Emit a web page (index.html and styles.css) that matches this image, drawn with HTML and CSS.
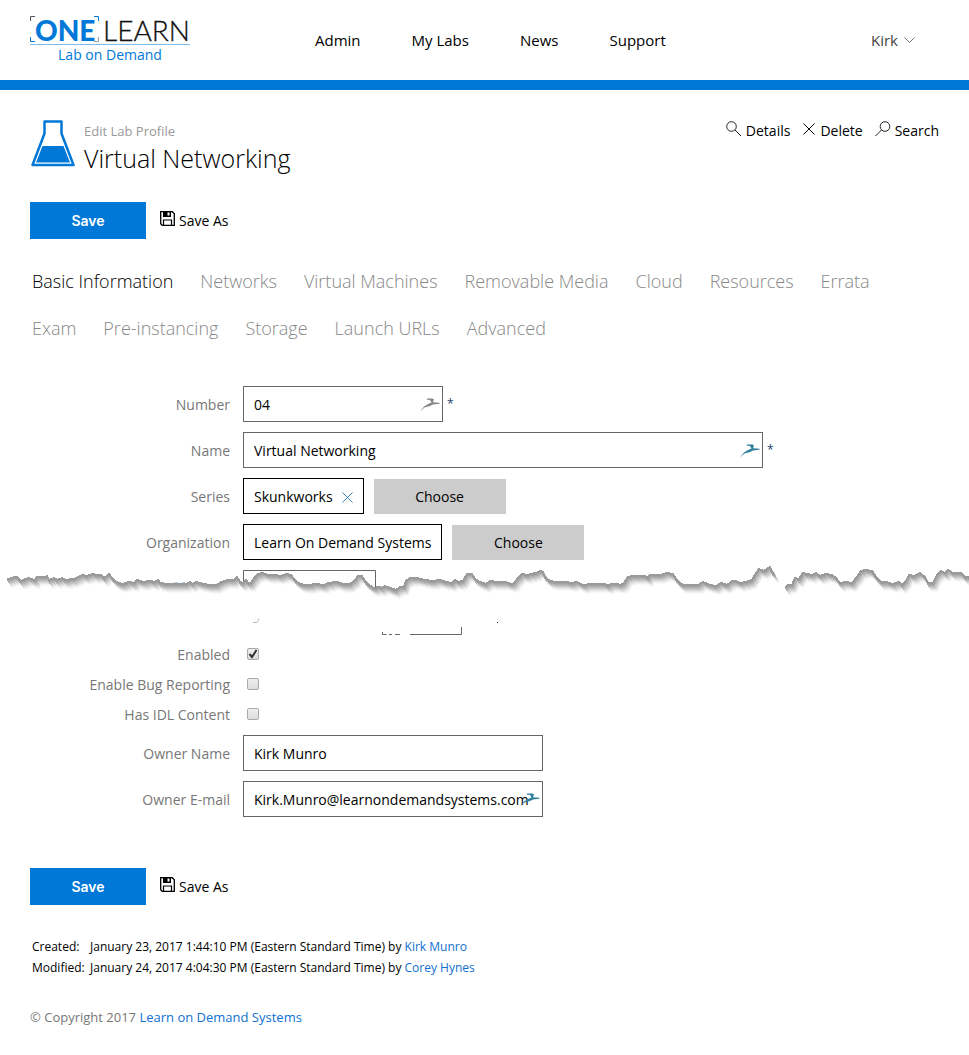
FILE: index.html
```html
<!DOCTYPE html>
<html lang="en">
<head>
<meta charset="utf-8">
<title>Edit Lab Profile - Virtual Networking</title>
<link rel="stylesheet" href="styles.css">
</head>
<body>
<svg class="defs" aria-hidden="true">
  <symbol id="floppy" viewBox="0 0 15 15"><path d="M.7.7h11.6l2 2v11.6H2.2L.7 12.800z" fill="none" stroke="#000" stroke-width="1.3"/><path d="M3 1h8v5H3z" fill="#000"/><path d="M7.500 1.500h2v3h-2z" fill="#fff"/><path d="M3.500 14V9h8v5" fill="none" stroke="#000" stroke-width="1.200"/></symbol>
  <symbol id="cross" viewBox="0 0 12 12"><path d="M.5.5l11 11M11.500.5l-11 11" fill="none" stroke="currentColor"/></symbol>
  <symbol id="crane" viewBox="0 0 20 14"><path d="M0 13.500L4 8.500 8 6l3.500-1.500L10 2 6.500 1.500 7 .5h5.500l1.500 1-1 2.800 6.500.5v1L13 6.500 10 8l-5.500 1.500z" fill="currentColor"/></symbol>
</svg>
<header class="top">
  <a class="logo" href="#" aria-label="One Learn Lab on Demand">
    <span class="brand"><span class="one">ONE</span><span class="learn">LEARN</span>
      <svg class="brackets" viewBox="0 0 70 27" width="70" height="27" fill="none" aria-hidden="true"><path d="M.5 5V.5H5" stroke="#555"/><path d="M64 .5h4.500V5M.5 21v4.500H5" stroke="#0078d7"/><path d="M64 25.500h4.500V21" stroke="#999"/></svg>
    </span>
    <span class="tagline">Lab on Demand</span>
  </a>
  <nav class="nav"><a href="#">Admin</a><a href="#">My Labs</a><a href="#">News</a><a href="#">Support</a></nav>
  <button class="user" type="button">Kirk <svg width="11" height="7" viewBox="0 0 11 7"><path d="M.5.5l5 5 5-5" fill="none" stroke="#777"/></svg></button>
</header>
<main>
  <div class="heading">
    <svg class="flask" width="44" height="47" viewBox="0 0 44 47" aria-hidden="true"><path d="M13.500 1.500h17v12L42.500 45h-41l12-31.500z" fill="#fff" stroke="#0078d7" stroke-width="2.500" stroke-linejoin="round"/><path d="M11.500 26h21L39 42.500H5z" fill="#0078d7"/></svg>
    <div class="titles"><p class="kicker">Edit Lab Profile</p><h1>Virtual Networking</h1></div>
    <div class="actions">
      <a href="#"><svg width="16" height="16" viewBox="0 0 16 16" fill="none" stroke="#222"><circle cx="5.500" cy="5.500" r="4.800"/><path d="M9 9l6 6"/></svg>Details</a>
      <a href="#"><svg class="x" width="12" height="12"><use href="#cross"/></svg>Delete</a>
      <a href="#"><svg width="16" height="16" viewBox="0 0 16 16" fill="none" stroke="#222"><circle cx="10" cy="5.500" r="4.800"/><path d="M6.500 9l-6 6"/></svg>Search</a>
    </div>
  </div>
  <div class="save-row"><button class="save" type="button">Save</button><a href="#"><svg width="15" height="15"><use href="#floppy"/></svg>Save As</a></div>
  <nav class="tabs"><a class="active" href="#">Basic Information</a><a href="#">Networks</a><a href="#">Virtual Machines</a><a href="#">Removable Media</a><a href="#">Cloud</a><a href="#">Resources</a><a href="#">Errata</a><a href="#">Exam</a><a href="#">Pre-instancing</a><a href="#">Storage</a><a href="#">Launch URLs</a><a href="#">Advanced</a></nav>
  <form class="form">
    <div class="row"><label for="number">Number</label><div class="control"><span class="field short"><input id="number" type="text" value="04"><svg class="crane muted"><use href="#crane"/></svg></span><span class="req">*</span></div></div>
    <div class="row"><label for="name">Name</label><div class="control"><span class="field long"><input id="name" type="text" value="Virtual Networking"><svg class="crane"><use href="#crane"/></svg></span><span class="req">*</span></div></div>
    <div class="row"><span class="label">Series</span><div class="control"><span class="chip">Skunkworks<button class="remove" type="button" aria-label="Remove Skunkworks"><svg width="11" height="11"><use href="#cross"/></svg></button></span><button class="choose" type="button">Choose</button></div></div>
    <div class="row"><span class="label">Organization</span><div class="control"><span class="chip">Learn On Demand Systems</span><button class="choose" type="button">Choose</button></div></div>
  </form>
  <svg class="tear" viewBox="0 0 969 75" preserveAspectRatio="none" aria-hidden="true">
    <defs>
      <g id="edge" fill="none" stroke-width="2" stroke-linejoin="round"><path d="M7 19.500L13 17.500 17 17 21 21 28 18 35 20 37 17H45L47 16 49 20 54 18 57 20 62 18 65 20 74 19 78 17 82 15 87 16 92 14 97 15H101L104 18 109 14 113 19 118 23 123 24 129 22 134 23 137 20 143 22 150 21 155 22 158 20 160 23 167 24H186L190 22 192 24 196 22 203 24 210 25H217L221 22 228 20H234L237 17 240 22 243 23 246 20 248 23H251L254 18 258 14 263 13 268 15H275L281 16 286 14 291 15 295 20 300 24 305 25H310L315 24 324 25 328 23 337 22 343 24H350L355 20 358 16H362L365 21 369 25 374 28 379 27 382 28 385 26 390 28 396 30 400 27H404L406 21 410 18H417L425 20 432 21 440 20 446 22 452 23 455 20 458 22 463 21 467 14H472L475 19 480 22 486 24 490 21 497 22H505L512 24 514 23 518 18 522 14 527 15 531 14 536 13 540 11 543 12 545 17 550 21 556 22H565L572 23 577 22 583 25 592 24H605L608 26 611 24H616L621 25 624 23 628 17 633 16H645L648 18 650 15H660L667 13 673 14 676 19 680 23 683 25H698L703 22 710 25 716 26 721 23 727 25 732 21H736L740 23 746 22 752 20 756 13 759 9 764 11 767 9 770 7 772 12 775 15"/><path d="M785 28L788 25H792L795 18 799 19 803 13 812 15 816 13 820 16 826 14 832 15 836 18 840 23 846 22 852 23 857 17 861 11 866 10 872 11 876 17 881 22H886L893 24 899 22 902 25 906 21 909 15 914 16 920 13 925 17 928 23H933L937 15 941 11 945 13 948 10 953 13H961L965 17 972 18"/></g>
    </defs>
    <path d="M243.500 23V10.500H375.500V29" fill="none" stroke="#666"/>
    <path d="M174 23h4M182 23h3M194 23h2M200 23h3" stroke="#6aa5c9"/>
    <g shape-rendering="crispEdges">
      <use href="#edge" x="4" y="8" stroke="#f9f9f9"/>
      <use href="#edge" x="4" y="7" stroke="#f1f1f1"/>
      <use href="#edge" x="3" y="6" stroke="#e6e6e6"/>
      <use href="#edge" x="3" y="5" stroke="#d8d8d8"/>
      <use href="#edge" x="2" y="4" stroke="#c9c9c9"/>
      <use href="#edge" x="1" y="3" stroke="#bbb"/>
      <use href="#edge" x="1" y="2" stroke="#aeaeae"/>
      <use href="#edge" y="1" stroke="#a2a2a2"/>
      <use href="#edge" stroke="#9a9a9a" stroke-width="1"/>
    </g>
    <path d="M253 62.500h4q1.500-1 1.500-4" fill="none" stroke="#bbb"/>
    <path d="M382.500 72v2.500h4M389 74.500h3M395 74.500h5M410 74.500h51.500V67" fill="none" stroke="#666"/>
    <path d="M497 62.500h1" stroke="#123"/>
  </svg>
  <form class="form lower">
    <div class="row check"><label for="enabled">Enabled</label><input id="enabled" type="checkbox" checked></div>
    <div class="row check"><label for="bugs">Enable Bug Reporting</label><input id="bugs" type="checkbox"></div>
    <div class="row check"><label for="idl">Has IDL Content</label><input id="idl" type="checkbox"></div>
    <div class="row"><label for="owner">Owner Name</label><div class="control"><span class="field mid"><input id="owner" type="text" value="Kirk Munro"></span></div></div>
    <div class="row"><label for="email">Owner E-mail</label><div class="control"><span class="field mid"><input id="email" type="text" value="Kirk.Munro@learnondemandsystems.com"><svg class="crane"><use href="#crane"/></svg></span></div></div>
  </form>
  <div class="save-row"><button class="save" type="button">Save</button><a href="#"><svg width="15" height="15"><use href="#floppy"/></svg>Save As</a></div>
  <dl class="meta">
    <dt>Created:</dt><dd>January 23, 2017 1:44:10 PM (Eastern Standard Time) by <a href="#">Kirk Munro</a></dd>
    <dt>Modified:</dt><dd>January 24, 2017 4:04:30 PM (Eastern Standard Time) by <a href="#">Corey Hynes</a></dd>
  </dl>
</main>
<footer>© Copyright 2017 <a href="#">Learn on Demand Systems</a></footer>
</body>
</html>
```
FILE: styles.css
```css
* { box-sizing: border-box; }
body { margin: 0; background: #fff; color: #000; font: 14px/20px "Open Sans", "Noto Sans", sans-serif; }
a { color: inherit; text-decoration: none; }
button, input { font: inherit; color: inherit; }
button { border: 0; background: none; padding: 0; cursor: pointer; }
svg { display: block; flex: none; }
.defs { position: absolute; width: 0; height: 0; }

.top { display: flex; align-items: center; height: 90px; padding: 0 54px 0 30px; border-bottom: 10px solid #0078d7; }
.logo { width: 160px; display: flex; flex-direction: column; }
.brand { position: relative; display: flex; align-items: center; justify-content: space-between; height: 30px; padding-left: 5px; border-bottom: 1px solid #7fbbea; font: 28px/28px Lato, sans-serif; }
.one { color: #0078d7; font-weight: 900; }
.learn { color: #111; font-weight: 300; -webkit-text-stroke: 0.3px #111; }
.brackets { position: absolute; left: 0; top: 1px; }
.tagline { color: #0078d7; text-align: center; line-height: 20px; }
.nav { display: flex; gap: 51px; margin-left: 125px; font-size: 15px; }
.user { display: flex; align-items: center; gap: 6px; margin-left: auto; color: #444; font-size: 15px; }

.heading { display: flex; padding: 30px 30px 0 31px; }
.titles { margin-left: 9px; }
.kicker { margin: 0; color: #999; font-size: 13px; line-height: 22px; }
h1 { margin: 0; font-size: 25px; font-weight: 300; line-height: 32px; }
.actions { display: flex; gap: 12px; margin-left: auto; height: 22px; }
.actions a, .save-row a { display: flex; align-items: center; gap: 4px; }
.actions svg { margin-bottom: 4px; }
.x { margin: 0 1px; }

.save-row { display: flex; gap: 14px; padding: 28px 30px 0; }
.save { width: 116px; height: 37px; background: #0078d7; color: #fff; font: 600 14px Inter, sans-serif; }
.save-row a svg { margin-bottom: 4px; }
.tabs { display: flex; flex-wrap: wrap; gap: 17px 27px; padding: 27px 32px 0; font-size: 18px; font-weight: 300; line-height: 30px; color: #888; }
.active { color: #000; }

.form { display: flex; flex-direction: column; gap: 10px; padding: 43px 30px 0; }
.row { display: grid; grid-template-columns: 200px 1fr; column-gap: 13px; align-items: center; color: #777; }
.row label, .label { text-align: right; }
.row:not(.check) label, .label, .chip { padding-top: 2px; }
.control { display: flex; align-items: center; height: 36px; color: #000; }
.field { position: relative; }
.field input { display: block; width: 100%; height: 36px; padding: 0 10px; border: 1px solid #666; border-radius: 0; background: #fff; outline: 0; }
.short { width: 200px; }
.mid { width: 300px; }
.long { width: 520px; }
.crane { position: absolute; right: 3px; top: 12px; width: 20px; height: 14px; color: #2f7f9b; }
.muted { color: #888; }
.req { margin-left: 4px; color: #246; font-size: 12px; }
.chip { display: flex; align-items: center; gap: 9px; height: 36px; padding-left: 10px; padding-right: 10px; border: 1px solid #000; }
.remove { color: #2a7ab5; }
.choose { width: 132px; height: 35px; margin-left: 10px; background: #ccc; align-self: flex-end; }
.tear { width: 100%; height: 75px; }
.lower { padding-top: 10px; gap: 10px; }
.check input { appearance: none; width: 12px; height: 12px; margin: 0 0 3px 4px; border: 1px solid #aaa; border-radius: 2px; background: linear-gradient(#eee, #ddd); }
.check input:checked { background: url("data:image/svg+xml,%3Csvg xmlns='http://www.w3.org/2000/svg' viewBox='0 0 10 10'%3E%3Cpath d='M1.500 5l2.500 3 4.500-7' fill='none' stroke='%23333' stroke-width='2'/%3E%3C/svg%3E") center / 10px 10px no-repeat, linear-gradient(#eee, #ddd); }
.lower + .save-row { padding-top: 51px; }

.meta { display: grid; grid-template-columns: 58px 1fr; margin: 31px 32px 0; font-size: 12px; line-height: 21px; }
.meta dd { margin: 0; }
.meta a, footer a { color: #0f6fd0; }
footer { padding: 29px 30px 28px; color: #777; font-size: 13px; }
```
